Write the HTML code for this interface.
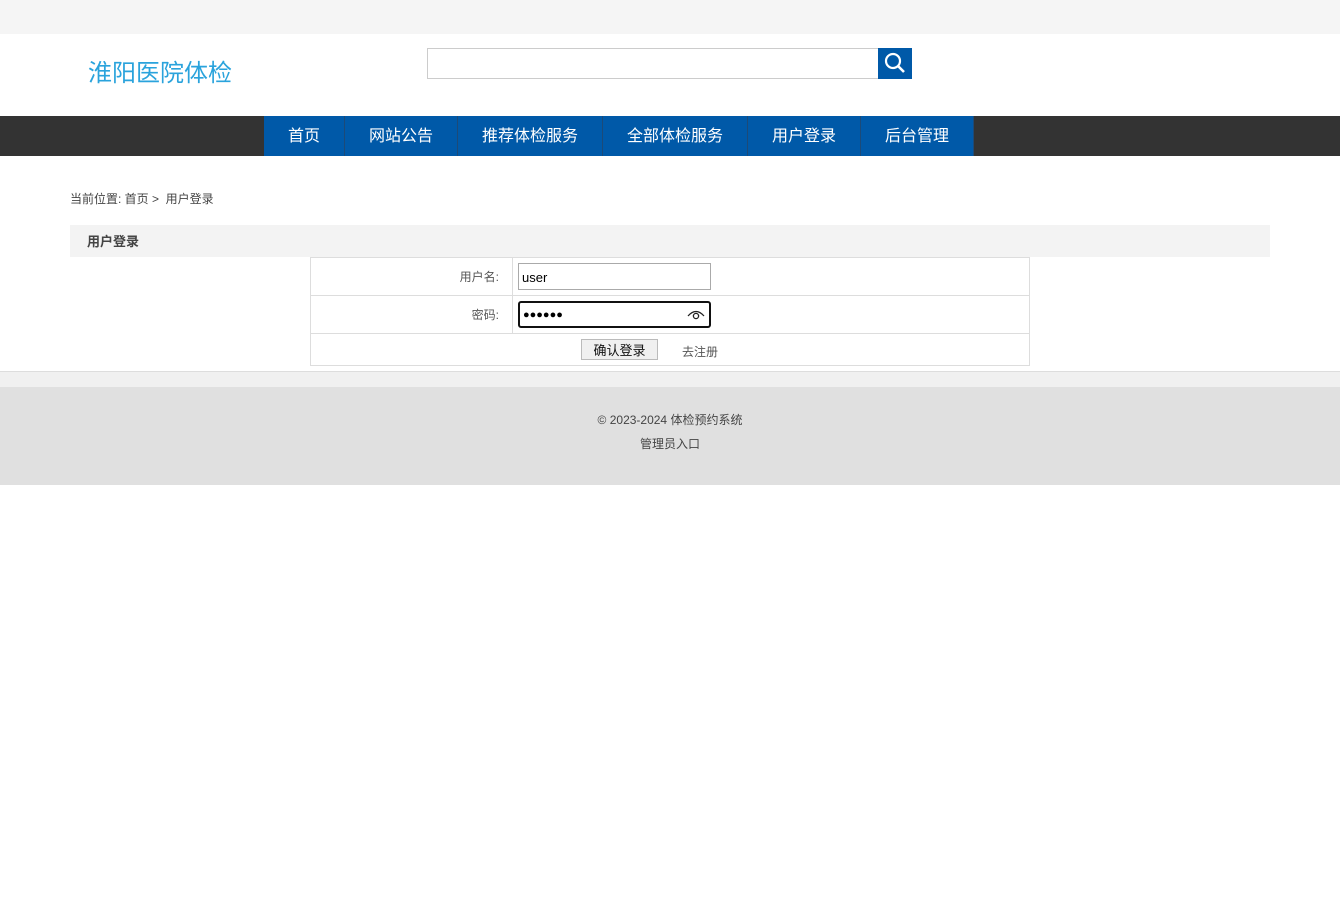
<!DOCTYPE html>
<html><head><meta charset="utf-8"><style>
*{margin:0;padding:0;box-sizing:border-box}
body{width:1340px;height:914px;background:#fff;font-family:"Liberation Sans","Noto Sans CJK SC",sans-serif;color:#333;position:relative;overflow:hidden}
.top{height:34px;background:#f5f5f5}
.logo{position:absolute;left:88px;top:53px;font-size:24px;color:#2aa3dc}
.search{position:absolute;left:427px;top:48px;width:452px;height:31px;border:1px solid #ccc}
.sbtn{position:absolute;left:878px;top:48px;width:34px;height:31px;background:#0059a8}
.nav{position:absolute;left:0;top:116px;width:1340px;height:40px;background:#333}
.nav a{position:absolute;top:0;height:40px;line-height:42px;background:#0059a8;color:#fff;font-size:16px;text-align:center;border-right:1px solid #1c4a78}
.crumb{position:absolute;left:70px;top:190px;font-size:12px;color:#444}
.bar{position:absolute;left:70px;top:225px;width:1200px;height:32px;background:#f3f3f3;font-size:13px;font-weight:bold;color:#444;line-height:33px;padding-left:17px}
.tbl{position:absolute;left:310px;top:257px;width:720px;border:1px solid #ddd}
.row{height:38px;border-bottom:1px solid #ddd;position:relative;font-size:12px}
.lab{position:absolute;left:0;top:0;width:202px;height:37px;border-right:1px solid #ddd;text-align:right;padding-right:13px;line-height:39px;color:#555}
.inp{position:absolute;left:207px;top:5px;width:193px;height:27px;border:1px solid #aaa;font-size:13px;line-height:27px;padding-left:3px;color:#000}
.pw{border:2px solid #111;border-radius:3px;top:5px;height:27px;line-height:24px}
.foot1{position:absolute;top:371px;left:0;width:1340px;height:16px;background:#f0f0f0;border-top:1px solid #ddd}
.foot{position:absolute;top:387px;left:0;width:1340px;height:98px;background:#e0e0e0;text-align:center;font-size:12px;color:#444}
</style></head><body>
<div class="top"></div>
<div class="logo">淮阳医院体检</div>
<div class="search"></div>
<div class="sbtn"><svg width="34" height="31" viewBox="0 0 34 31"><circle cx="15" cy="13" r="7" fill="none" stroke="#fff" stroke-width="2.2"/><line x1="20" y1="18" x2="26" y2="24" stroke="#fff" stroke-width="2.6"/></svg></div>
<div class="nav">
<a style="left:264px;width:81px">首页</a>
<a style="left:345px;width:113px">网站公告</a>
<a style="left:458px;width:145px">推荐体检服务</a>
<a style="left:603px;width:145px">全部体检服务</a>
<a style="left:748px;width:113px">用户登录</a>
<a style="left:861px;width:113px">后台管理</a>
</div>
<div class="crumb">当前位置: 首页 &gt; &nbsp;用户登录</div>
<div class="bar">用户登录</div>
<div class="tbl">
<div class="row"><div class="lab">用户名:</div><div class="inp">user</div></div>
<div class="row"><div class="lab">密码:</div><div class="inp pw" style="font-size:11px">●●●●●●<svg style="position:absolute;right:4px;top:5px" width="18" height="12" viewBox="0 0 18 12"><path d="M1 8 Q9 -1 17 8" fill="none" stroke="#222" stroke-width="1.3"/><circle cx="9" cy="8" r="2.6" fill="none" stroke="#222" stroke-width="1.3"/></svg></div></div>
<div class="row" style="height:31px;border-bottom:0"><div style="position:absolute;left:270px;top:5px;width:77px;height:21px;border:1px solid #bbb;background:#f0f0f0;font-size:13px;text-align:center;line-height:22px;color:#111">确认登录</div><div style="position:absolute;left:371px;top:9px;color:#555">去注册</div></div>
</div>
<div class="foot1"></div>
<div class="foot"><div style="padding-top:24px">© 2023-2024 体检预约系统</div><div style="margin-top:7px">管理员入口</div></div>
</body></html>
